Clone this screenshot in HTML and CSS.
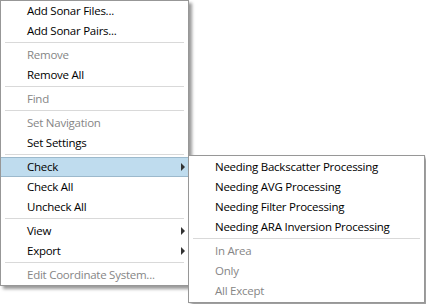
FILE: index.html
```html
<!DOCTYPE html>
<html lang="en">
<head>
<meta charset="UTF-8">
<title>Sonar Context Menu</title>
<link rel="stylesheet" href="styles.css">
</head>
<body>

<div class="desk">
  <div class="menu main-menu">
    <div class="item">Add Sonar Files...</div>
    <div class="item">Add Sonar Pairs...</div>
    <div class="sep"></div>
    <div class="item disabled">Remove</div>
    <div class="item">Remove All</div>
    <div class="sep"></div>
    <div class="item disabled">Find</div>
    <div class="sep"></div>
    <div class="item disabled">Set Navigation</div>
    <div class="item">Set Settings</div>
    <div class="sep"></div>
    <div class="item active">Check<span class="arrow"></span></div>
    <div class="item">Check All</div>
    <div class="item">Uncheck All</div>
    <div class="sep"></div>
    <div class="item">View<span class="arrow"></span></div>
    <div class="item">Export<span class="arrow"></span></div>
    <div class="sep"></div>
    <div class="item disabled">Edit Coordinate System...</div>
  </div>

  <!-- flyout for "Check" -->
  <div class="menu sub-menu">
    <div class="item">Needing Backscatter Processing</div>
    <div class="item">Needing AVG Processing</div>
    <div class="item">Needing Filter Processing</div>
    <div class="item">Needing ARA Inversion Processing</div>
    <div class="sep"></div>
    <div class="item disabled">In Area</div>
    <div class="item disabled">Only</div>
    <div class="item disabled">All Except</div>
  </div>
</div>

</body>
</html>
```

FILE: styles.css
```css
body {
  margin: 0;
  background-color: #fff;
  font-family: "Open Sans", "Noto Sans", sans-serif;
  font-size: 11.5px;
  letter-spacing: -0.25px;
  color: #000;
}

.desk {
  position: relative;
  width: 426px;
  height: 304px;
  overflow: hidden;
}

.menu {
  background-color: #fff;
  border: 1px solid #979797;
  box-shadow: 3px 3px 3px rgba(0, 0, 0, 0.4);
  display: flex;
  flex-direction: column;
}

.main-menu {
  width: 187px;
}

.sub-menu {
  position: absolute;
  left: 188px;
  top: 155px;
  width: 235px;
  padding: 1px 0;
}

.item {
  position: relative;
  height: 20px;
  line-height: 20px;
  padding-left: 26px;
  white-space: nowrap;
}

.item.disabled {
  color: #868686;
}

.item.active {
  background-color: #bfdcee;
  box-shadow: inset 0 1px 0 #9cb9cc, inset 0 -1px 0 #9cb9cc;
}

.sep {
  height: 1px;
  margin: 1px 4px 2px 4px;
  background-color: #d9d9d9;
}

.arrow {
  position: absolute;
  right: 3px;
  top: 6px;
  width: 0;
  height: 0;
  border-top: 4px solid transparent;
  border-bottom: 4px solid transparent;
  border-left: 4px solid #333;
}
```
